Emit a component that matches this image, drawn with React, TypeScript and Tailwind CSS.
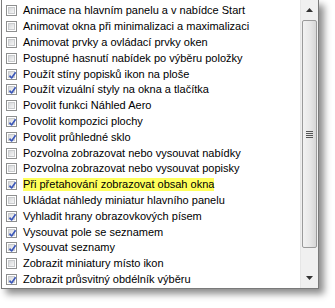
import React from 'react';

const items: { label: string; checked: boolean; highlight?: boolean }[] = [
  { label: 'Animace na hlavním panelu a v nabídce Start', checked: false },
  { label: 'Animovat okna při minimalizaci a maximalizaci', checked: false },
  { label: 'Animovat prvky a ovládací prvky oken', checked: false },
  { label: 'Postupné hasnutí nabídek po výběru položky', checked: false },
  { label: 'Použít stíny popisků ikon na ploše', checked: true },
  { label: 'Použít vizuální styly na okna a tlačítka', checked: true },
  { label: 'Povolit funkci Náhled Aero', checked: false },
  { label: 'Povolit kompozici plochy', checked: true },
  { label: 'Povolit průhledné sklo', checked: true },
  { label: 'Pozvolna zobrazovat nebo vysouvat nabídky', checked: false },
  { label: 'Pozvolna zobrazovat nebo vysouvat popisky', checked: false },
  { label: 'Při přetahování zobrazovat obsah okna', checked: true, highlight: true },
  { label: 'Ukládat náhledy miniatur hlavního panelu', checked: false },
  { label: 'Vyhladit hrany obrazovkových písem', checked: true },
  { label: 'Vysouvat pole se seznamem', checked: true },
  { label: 'Vysouvat seznamy', checked: true },
  { label: 'Zobrazit miniatury místo ikon', checked: false },
  { label: 'Zobrazit průsvitný obdélník výběru', checked: true },
];

function CheckBox({ checked }: { checked: boolean }) {
  return (
    <div className="w-[11px] h-[11px] shrink-0 border border-[#8e8f8f] bg-white p-px">
      <div className="relative w-full h-full border border-[#c9cbcd] bg-gradient-to-br from-[#d6d8da] to-[#f6f6f6]">
        {checked && (
          <svg viewBox="0 0 9 9" className="absolute -left-px -top-px w-[9px] h-[9px]">
            <path d="M1.5 4.6 L3.6 7 L7.6 1.2" fill="none" stroke="#3a56b8" strokeWidth="1.6" strokeLinejoin="round" />
          </svg>
        )}
      </div>
    </div>
  );
}

function ScrollBar() {
  return (
    <div className="w-[18px] shrink-0 flex flex-col bg-[#f0f0f0] border-l border-[#e6e6e6]">
      <div className="h-[20px] shrink-0 flex items-center justify-center">
        <svg viewBox="0 0 7 4" className="w-[7px] h-[4px]">
          <path d="M0 4 L3.5 0 L7 4 Z" fill="#333" />
        </svg>
      </div>
      <div className="h-[228px] shrink-0 mx-px rounded-[2px] border border-[#9a9a9a] bg-gradient-to-r from-[#f2f2f2] via-[#e8e8e8] to-[#d6d6d6] flex items-center justify-center">
        <div className="flex flex-col gap-px">
          <div className="w-[7px] h-px bg-[#555]" />
          <div className="w-[7px] h-px bg-[#555]" />
          <div className="w-[7px] h-px bg-[#555]" />
          <div className="w-[7px] h-px bg-[#555]" />
        </div>
      </div>
      <div className="flex-1" />
      <div className="h-[20px] shrink-0 flex items-center justify-center">
        <svg viewBox="0 0 7 4" className="w-[7px] h-[4px]">
          <path d="M0 0 L7 0 L3.5 4 Z" fill="#333" />
        </svg>
      </div>
    </div>
  );
}

export default function App() {
  return (
    <div className="w-[335px] h-[308px] bg-white overflow-hidden" style={{ fontFamily: '"Liberation Sans", Arial, sans-serif' }}>
      <div className="ml-px w-[318px] h-[289px] flex border border-t-0 border-[#7a7a7a] bg-white shadow-[5px_5px_7px_rgba(0,0,0,0.45)]">
        <div className="flex-1 pt-[3px]">
          {items.map((it) => (
            <div key={it.label} className="h-[15.8px] flex items-center pl-[4px]">
              <CheckBox checked={it.checked} />
              <span
                className={`ml-[6px] text-[11px] leading-[13px] text-black whitespace-nowrap ${it.highlight ? 'bg-[#ffff5c]' : ''}`}
              >
                {it.label}
              </span>
            </div>
          ))}
        </div>
        <ScrollBar />
      </div>
    </div>
  );
}
